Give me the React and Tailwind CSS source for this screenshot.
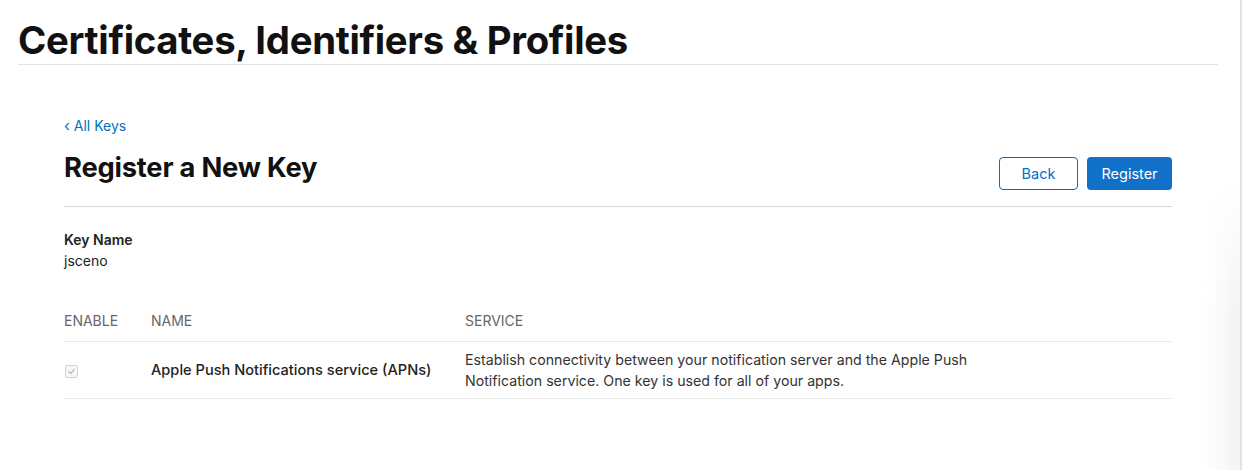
import React from "react";

export default function App() {
  return (
    <div
      className="relative w-[1242px] h-[470px] overflow-hidden bg-white text-[#111111]"
      style={{ fontFamily: "Inter, 'Noto Sans', sans-serif" }}
    >
      <header className="mx-[18px] w-[1200px] border-b border-[#e3e3e3] pt-[19px] pb-[2px]">
        <h1 className="text-[38.3px] leading-[43px] font-bold tracking-[-0.3px] text-[#111111]">
          Certificates, Identifiers &amp; Profiles
        </h1>
      </header>

      <main className="ml-[64px] w-[1108px] pt-[52px]">
        <a className="flex items-center gap-[4px] text-[14px] leading-[18px] text-[#0070c9]">
          <span className="text-[15px] leading-[18px]">‹</span>
          <span>All Keys</span>
        </a>

        <div className="mt-[17px] flex items-start justify-between border-b border-[#d8d8d8] pb-[16px]">
          <h2 className="text-[27.3px] leading-[32px] font-bold tracking-[-0.2px] text-[#111111]">
            Register a New Key
          </h2>
          <div className="mt-[5px] flex gap-[9px]">
            <button className="h-[33px] w-[79px] rounded-[4px] border border-[#0070c9] bg-white text-[14.5px] text-[#0070c9]">
              Back
            </button>
            <button className="h-[33px] w-[85px] rounded-[4px] bg-[#1171c9] text-[14.5px] text-white">
              Register
            </button>
          </div>
        </div>

        <div className="pt-[23px]">
          <div className="text-[14px] leading-[20px] font-semibold text-[#222222]">Key Name</div>
          <div className="text-[14px] leading-[21px] text-[#222222]">jsceno</div>
        </div>

        <div className="mt-[41px]">
          <div className="flex border-b border-[#e8e8e8] pb-[11px] text-[14px] leading-[18px] text-[#666666]">
            <div className="w-[87px]">ENABLE</div>
            <div className="w-[314px]">NAME</div>
            <div>SERVICE</div>
          </div>
          <div className="flex items-center border-b border-[#e8e8e8] py-[7px] text-[14.2px]">
            <div className="w-[87px] flex items-center">
              <div className="ml-[1px] mt-[2px] flex h-[13px] w-[13px] items-center justify-center rounded-[2px] border border-[#d4d4d4] bg-[#f7f7f7]">
                <svg width="9" height="9" viewBox="0 0 10 10">
                  <path d="M2 5.2 L4.2 7.4 L8 2.6" fill="none" stroke="#b8b8b8" strokeWidth="1.4" strokeLinecap="round" strokeLinejoin="round" />
                </svg>
              </div>
            </div>
            <div className="w-[314px] text-[14.6px] font-medium leading-[21px] text-[#222222]">
              Apple Push Notifications service (APNs)
            </div>
            <div className="w-[520px] leading-[21px] text-[#333333]">
              Establish connectivity between your notification server and the Apple Push Notification service. One key is used for all of your apps.
            </div>
          </div>
        </div>
      </main>

      <div className="absolute right-0 top-0 h-full w-[2px] bg-[#e2e2e2]" />
      <div className="absolute right-[2px] top-[180px] h-[290px] w-[36px] bg-gradient-to-r from-transparent to-[#f3f3f3] [mask-image:linear-gradient(to_bottom,transparent,black_45%)]" />
    </div>
  );
}
